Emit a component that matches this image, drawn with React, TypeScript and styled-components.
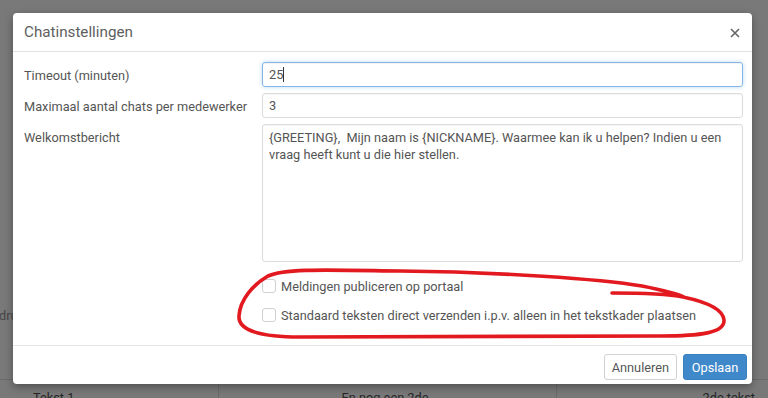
import React from "react";
import styled, { createGlobalStyle } from "styled-components";

const GlobalStyle = createGlobalStyle`
  html, body { margin: 0; padding: 0; }
  body { font-family: Roboto, "Open Sans", Arial, sans-serif; }
  * { box-sizing: border-box; }
`;

const Page = styled.div`
  position: relative;
  width: 768px;
  height: 398px;
  overflow: hidden;
  background: #797979;
  font-size: 12.75px;
`;

const Behind = styled.div`
  display: flex;
  flex-direction: column;
  padding-top: 307px;
  color: #3a3a3a;
`;

const CutText = styled.div`
  margin-left: -1px;
  height: 20px;
  line-height: 17px;
  color: #474747;
`;

const BgTable = styled.div`
  margin-top: 52px;
  border-top: 1px solid #6c6c6c;
  display: grid;
  grid-template-columns: 218px 338px 1fr;
  height: 30px;
`;

const BgCell = styled.div<{ $align: "left" | "center" | "right" }>`
  padding: 10px 13px 0 33px;
  text-align: ${(p) => p.$align};
  border-left: ${(p) => (p.$align === "left" ? "none" : "1px solid #6a6a6a")};
  padding-left: ${(p) => (p.$align === "left" ? "33px" : "8px")};
  color: #262626;
`;

const Modal = styled.div`
  position: absolute;
  top: 13px;
  left: 13px;
  width: 739px;
  background: #fff;
  border-radius: 4px;
  box-shadow: 0 3px 9px rgba(0, 0, 0, 0.35);
  display: flex;
  flex-direction: column;
  color: #555;
`;

const Header = styled.div`
  height: 39px;
  border-bottom: 1px solid #e2e2e2;
  display: flex;
  align-items: center;
  justify-content: space-between;
  padding: 0 11px 0 11px;
`;

const Title = styled.h4`
  margin: 0;
  font-size: 15.2px;
  font-weight: 400;
  color: #5e5e5e;
`;

const Close = styled.button`
  border: 0;
  background: none;
  padding: 0;
  margin-top: 1px;
  width: 12px;
  height: 12px;
  display: flex;
  align-items: center;
  justify-content: center;
`;

const Body = styled.div`
  display: grid;
  grid-template-columns: 238px 1fr;
  row-gap: 6px;
  padding: 10px 9px 20px 11px;
`;

const Label = styled.label`
  padding-top: 5px;
  line-height: 17px;
  color: #555;
`;

const Field = styled.div<{ $focused?: boolean }>`
  height: 25px;
  border: 1px solid ${(p) => (p.$focused ? "#86b5e3" : "#dcdcdc")};
  border-radius: 3px;
  box-shadow: ${(p) =>
    p.$focused
      ? "inset 0 1px 1px rgba(0,0,0,.05), 0 0 4px rgba(102,175,233,.45)"
      : "inset 0 1px 1px rgba(0,0,0,.04)"};
  padding: 0 6px;
  display: flex;
  align-items: center;
  color: #555;
`;

const Caret = styled.span`
  display: inline-block;
  width: 1px;
  height: 15px;
  background: #333;
`;

const TextArea = styled.textarea`
  height: 138px;
  border: 1px solid #dcdcdc;
  border-radius: 3px;
  padding: 4px 6px;
  resize: none;
  font-family: Roboto, "Open Sans", Arial, sans-serif;
  font-size: 12.75px;
  line-height: 17px;
  color: #555;
  box-shadow: inset 0 1px 1px rgba(0, 0, 0, 0.04);
  outline: none;
`;

const CheckList = styled.div`
  grid-column: 2;
  display: flex;
  flex-direction: column;
  gap: 9px;
  margin-top: 8px;
`;

const CheckRow = styled.label`
  height: 20px;
  display: flex;
  align-items: center;
  gap: 5px;
  color: #555;
`;

const Box = styled.span`
  width: 14px;
  height: 14px;
  border: 1px solid #d0d0d0;
  border-radius: 3px;
  background: #fff;
  flex: none;
`;

const Footer = styled.div`
  border-top: 1px solid #e5e5e5;
  padding: 8px 5px 4px;
  display: flex;
  justify-content: flex-end;
  gap: 6px;
`;

const Button = styled.button<{ $primary?: boolean }>`
  height: 26px;
  padding: 0 7px;
  border-radius: 3px;
  font-family: Roboto, "Open Sans", Arial, sans-serif;
  font-size: 12.75px;
  border: 1px solid ${(p) => (p.$primary ? "#3a80c0" : "#d2d2d2")};
  background: ${(p) => (p.$primary ? "#3f88c9" : "#fff")};
  color: ${(p) => (p.$primary ? "#fff" : "#555")};
  min-width: ${(p) => (p.$primary ? "64px" : "70px")};
`;

const Scribble = styled.svg`
  position: absolute;
  left: 0;
  top: 0;
  pointer-events: none;
`;

const message =
  "{GREETING},  Mijn naam is {NICKNAME}. Waarmee kan ik u helpen? Indien u een vraag heeft kunt u die hier stellen.";

export default function App() {
  return (
    <>
      <GlobalStyle />
      <Page>
        <Behind>
          <CutText>dru</CutText>
          <BgTable>
            <BgCell $align="left">Tekst 1</BgCell>
            <BgCell $align="center">En nog een 2de</BgCell>
            <BgCell $align="right">2de tekst</BgCell>
          </BgTable>
        </Behind>
        <Modal>
          <Header>
            <Title>Chatinstellingen</Title>
            <Close aria-label="Sluiten">
              <svg width="10" height="10" viewBox="0 0 10 10">
                <path d="M1 1 L9 9 M9 1 L1 9" stroke="#666" strokeWidth="1.6" />
              </svg>
            </Close>
          </Header>
          <Body>
            <Label>Timeout (minuten)</Label>
            <Field $focused>
              25
              <Caret />
            </Field>
            <Label>Maximaal aantal chats per medewerker</Label>
            <Field>3</Field>
            <Label>Welkomstbericht</Label>
            <TextArea readOnly value={message} />
            <CheckList>
              <CheckRow>
                <Box />
                Meldingen publiceren op portaal
              </CheckRow>
              <CheckRow>
                <Box />
                Standaard teksten direct verzenden i.p.v. alleen in het tekstkader plaatsen
              </CheckRow>
            </CheckList>
          </Body>
          <Footer>
            <Button>Annuleren</Button>
            <Button $primary>Opslaan</Button>
          </Footer>
        </Modal>
        <Scribble width="768" height="398" viewBox="0 0 768 398">
          <path
            d="M612 293 C640 293 668 294 683 297 C702 301 723 308 724 320 C725 333 700 336 660 336 L300 337 C262 337 238 331 239 316 C240 299 254 284 268 276 C285 268 330 270 400 271 C500 272 600 279 642 286 C662 290 676 293 684 297"
            fill="none"
            stroke="#e2191f"
            strokeWidth="3.6"
            strokeLinecap="round"
            strokeLinejoin="round"
          />
        </Scribble>
      </Page>
    </>
  );
}
